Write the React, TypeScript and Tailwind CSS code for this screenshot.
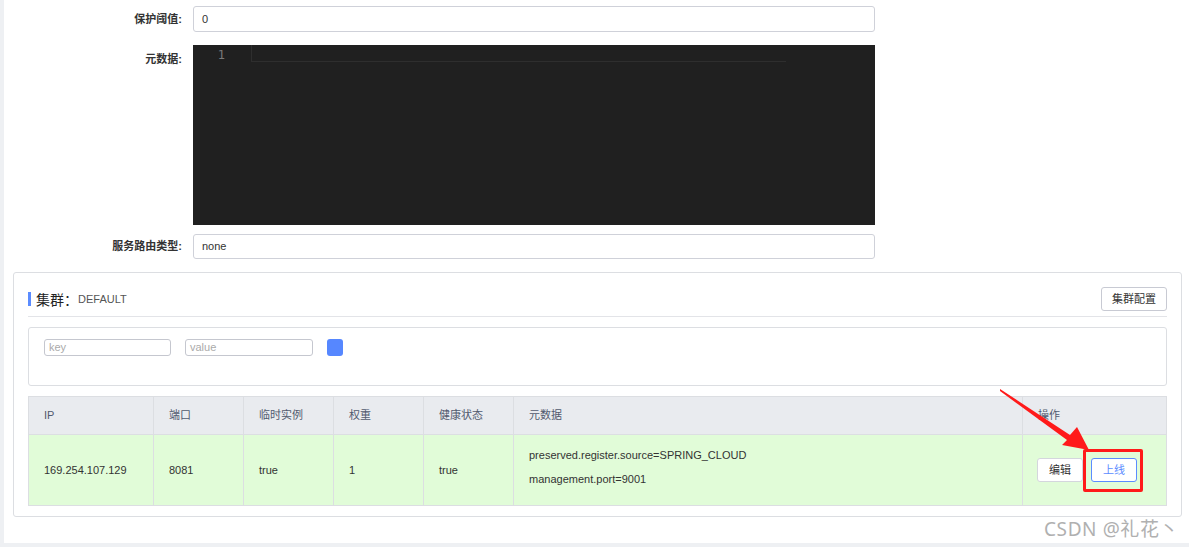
import React from "react";

const font = { fontFamily: '"Liberation Sans", "Noto Sans CJK SC", sans-serif' };

function Row({ label, children, className = "" }: { label: string; children: React.ReactNode; className?: string }) {
  return (
    <div className={"flex items-center " + className}>
      <div className="w-[178px] text-right text-[11px] text-[#333] font-semibold">{label}</div>
      <div className="ml-[11px] w-[682px]">{children}</div>
    </div>
  );
}

export default function App() {
  const cols = [
    { w: "w-[125px]", t: "IP" },
    { w: "w-[90px]", t: "端口" },
    { w: "w-[90px]", t: "临时实例" },
    { w: "w-[90px]", t: "权重" },
    { w: "w-[90px]", t: "健康状态" },
    { w: "w-[509px]", t: "元数据" },
    { w: "flex-1", t: "操作" },
  ];
  return (
    <div className="relative w-[1189px] h-[547px] bg-[#eef0f3] overflow-hidden" style={font}>
      <div className="ml-[4px] h-[543px] bg-white pt-[6px]">
        <Row label="保护阈值:" className="h-[26px]">
          <div className="h-[26px] border border-[#cfd1d9] rounded-[3px] flex items-center px-[8px] text-[11px] text-[#333]">0</div>
        </Row>
        <div className="flex items-start mt-[13px]">
          <div className="w-[178px] text-right text-[11px] text-[#333] font-semibold pt-[6px]">元数据:</div>
          <div className="ml-[11px] w-[682px] h-[180px] bg-[#202020] flex">
            <div className="w-[58px] text-right pr-[26px] text-[12px] text-[#7a7a7a] pt-[1px]" style={{ fontFamily: '"DejaVu Sans Mono", monospace' }}>1</div>
            <div className="w-[535px] h-[17px] border-l border-b border-[#2e2e2e]" />
          </div>
        </div>
        <Row label="服务路由类型:" className="mt-[9px] h-[25px]">
          <div className="h-[25px] border border-[#cfd1d9] rounded-[3px] flex items-center px-[8px] text-[11px] text-[#333]">none</div>
        </Row>

        <div className="ml-[9px] mt-[13px] w-[1169px] h-[245px] border border-[#dcdee2] rounded-[3px] px-[14px] pt-[14px]">
          <div className="flex items-center justify-between h-[24px]">
            <div className="flex items-center">
              <div className="w-[3px] h-[14px] bg-[#5b8cff]" />
              <span className="ml-[5px] text-[14px] text-[#222]" style={{ fontFamily: '"Noto Sans CJK SC", sans-serif' }}>集群：</span>
              <span className="text-[11px] text-[#555]">DEFAULT</span>
            </div>
            <div className="h-[24px] w-[66px] border border-[#c8cad3] rounded-[3px] flex items-center justify-center text-[11px] text-[#333]">集群配置</div>
          </div>
          <div className="mt-[5px] border-t border-[#e3e4e8]" />
          <div className="mt-[10px] h-[59px] border border-[#dcdee2] rounded-[3px] pl-[15px] pt-[11px] flex items-start">
            <div className="w-[127px] h-[17px] border border-[#c5c7cf] rounded-[3px] px-[4px] text-[11px] leading-[15px] text-[#aaa]">key</div>
            <div className="ml-[14px] w-[128px] h-[17px] border border-[#c5c7cf] rounded-[3px] px-[4px] text-[11px] leading-[15px] text-[#aaa]">value</div>
            <div className="ml-[14px] w-[16px] h-[17px] bg-[#5687ff] rounded-[3px]" />
          </div>
          <div className="mt-[10px] border border-[#dcdee2] text-[11px]">
            <div className="flex h-[38px] bg-[#e9ebef] border-b border-[#dcdee2]">
              {cols.map((c, i) => (
                <div key={i} className={c.w + " flex items-center pl-[15px] text-[#515a6e] " + (i < cols.length - 1 ? "border-r border-[#dcdee2]" : "")}>{c.t}</div>
              ))}
            </div>
            <div className="flex h-[70px] bg-[#e1fcd8] text-[#333]">
              <div className="w-[125px] border-r border-[#dcdee2] flex items-center pl-[15px]">169.254.107.129</div>
              <div className="w-[90px] border-r border-[#dcdee2] flex items-center pl-[15px]">8081</div>
              <div className="w-[90px] border-r border-[#dcdee2] flex items-center pl-[15px]">true</div>
              <div className="w-[90px] border-r border-[#dcdee2] flex items-center pl-[15px]">1</div>
              <div className="w-[90px] border-r border-[#dcdee2] flex items-center pl-[15px]">true</div>
              <div className="w-[509px] border-r border-[#dcdee2] flex flex-col pt-[13px] pl-[15px] gap-[10px] leading-[14px]">
                <div>preserved.register.source=SPRING_CLOUD</div>
                <div>management.port=9001</div>
              </div>
              <div className="flex-1 flex items-center pl-[14px]">
                <div className="w-[46px] h-[24px] bg-white border border-[#d4d6dd] rounded-[3px] flex items-center justify-center text-[#333]">编辑</div>
                <div className="ml-[8px] w-[46px] h-[24px] bg-white border border-[#5b8cff] rounded-[3px] flex items-center justify-center text-[#5b8cff]">上线</div>
              </div>
            </div>
          </div>
        </div>
      </div>

      <div className="absolute left-[1083px] top-[449px] w-[60px] h-[43px] border-[3px] border-[#ff1a1a] rounded-[2px]" />
      <svg className="absolute left-0 top-0 pointer-events-none" width="1189" height="547">
        <polygon points="1000,389 1070,435 1077,427 1089,450 1062,445 1067,440 1000,391" fill="#ff1a1a" />
      </svg>
      <div className="absolute left-[1044px] top-[515px] text-[19px] text-[#b0b0b0] tracking-[0.6px]" style={{ fontFamily: '"Noto Sans", "Noto Sans CJK SC", sans-serif' }}>CSDN @礼花丶</div>
    </div>
  );
}
